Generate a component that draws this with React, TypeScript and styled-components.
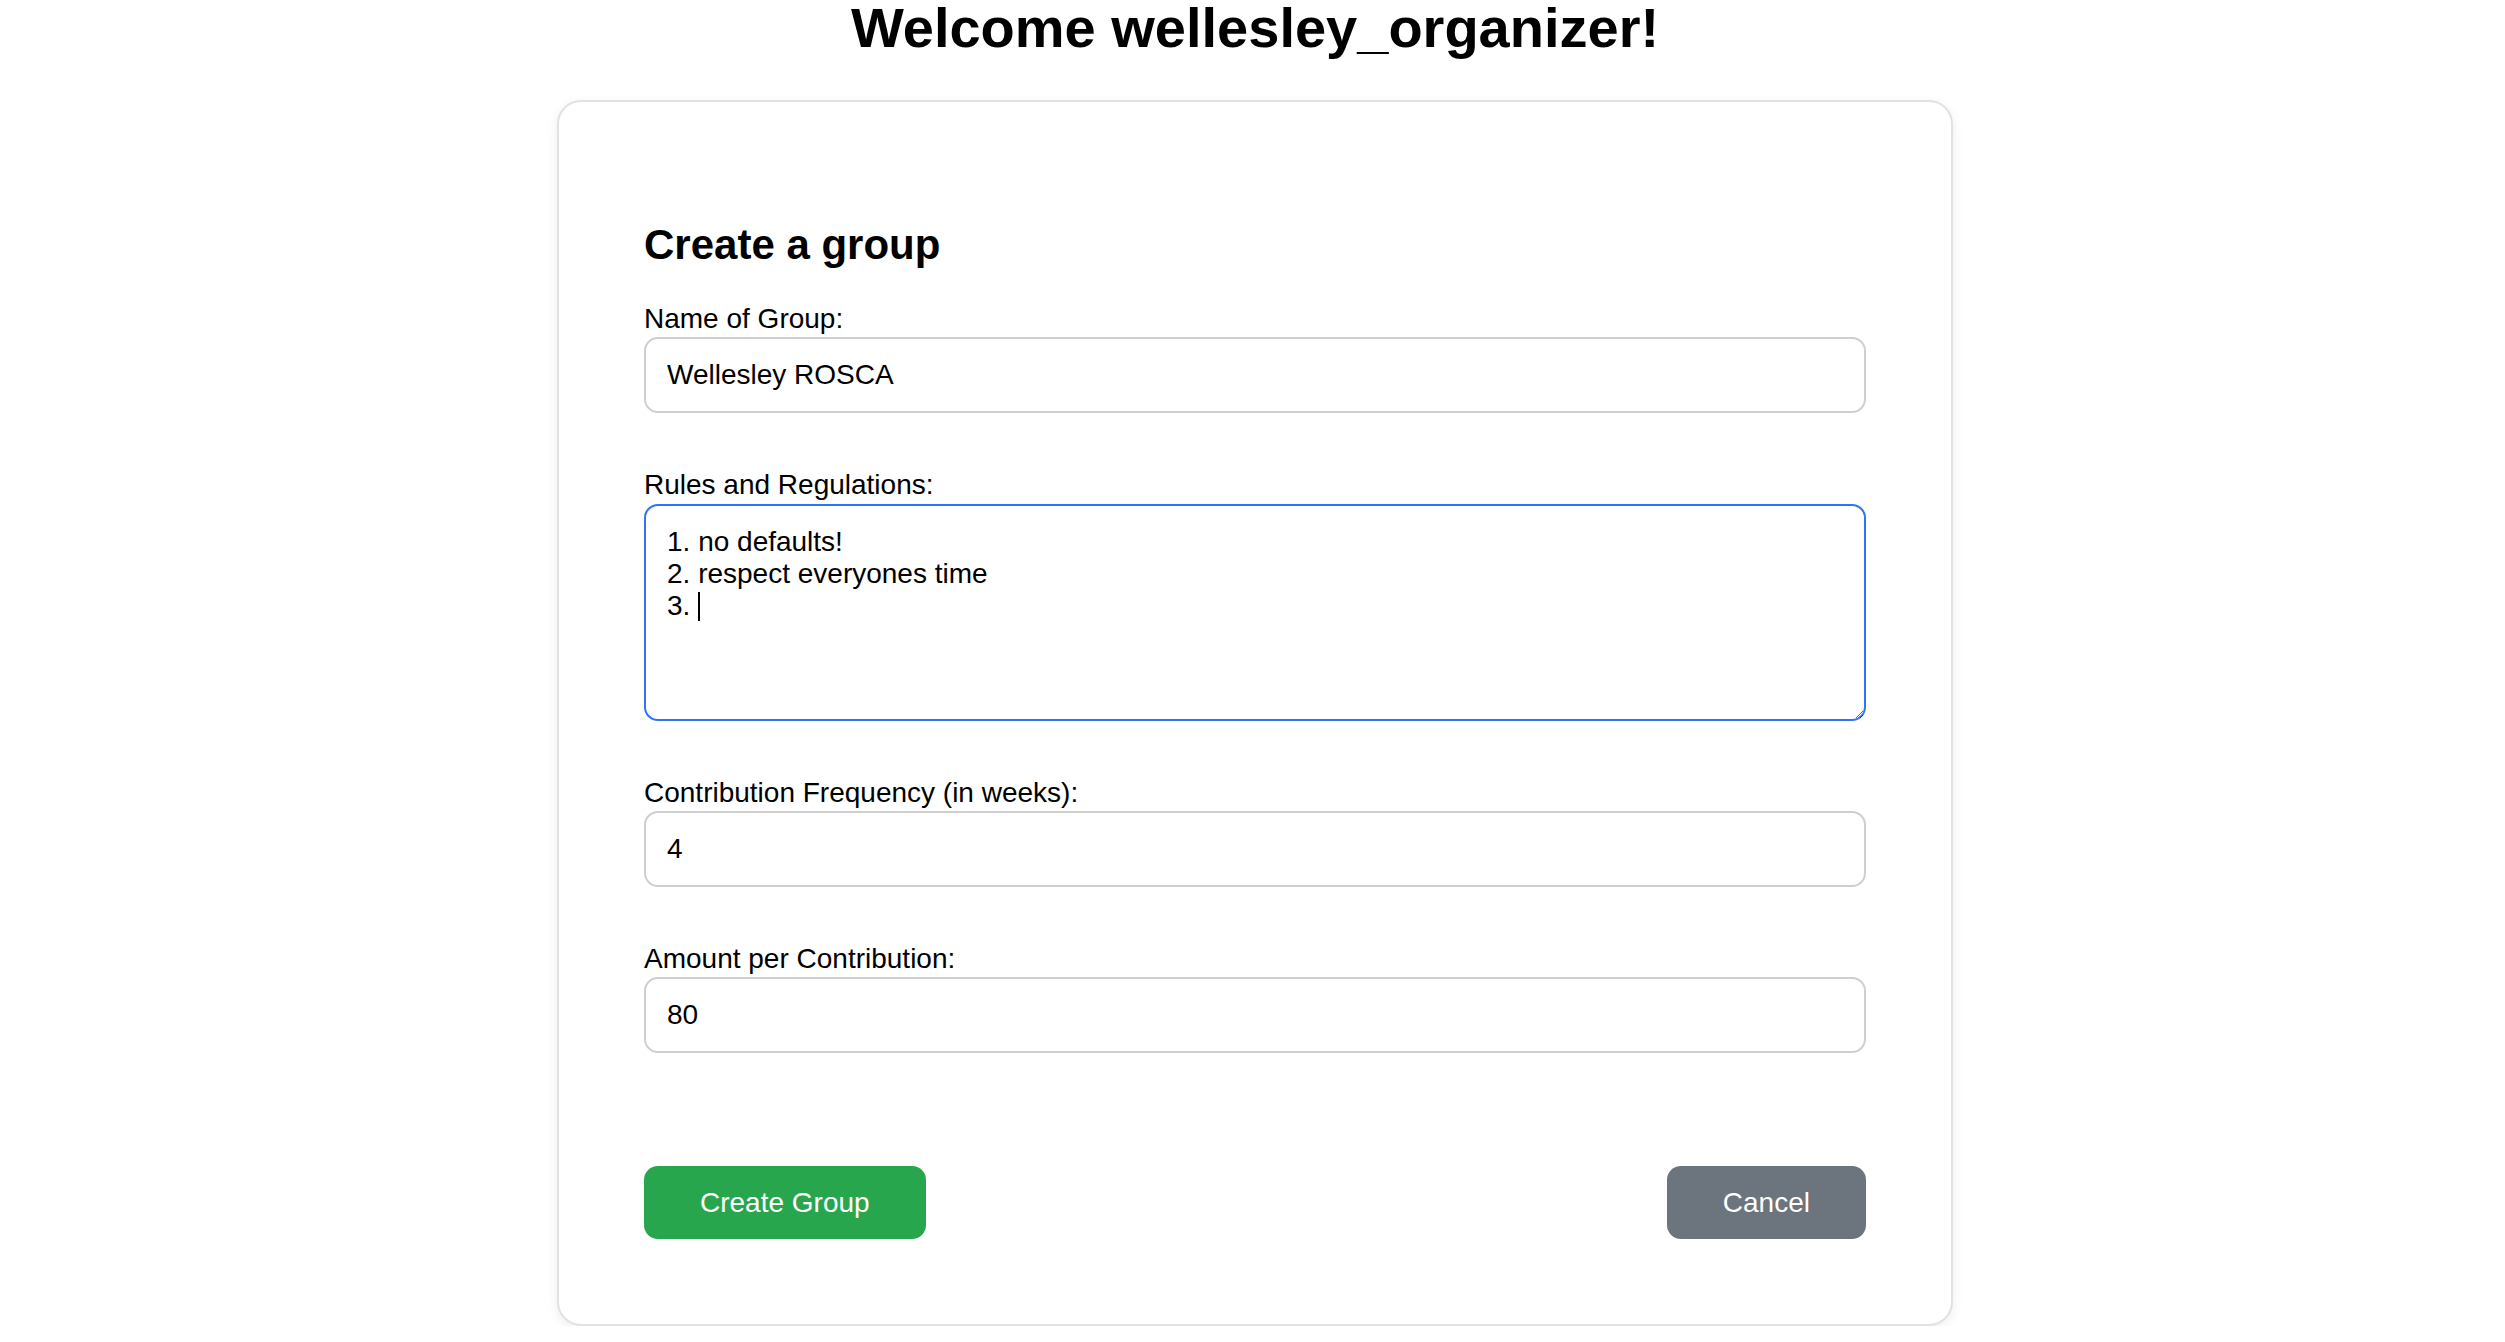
import styled, { createGlobalStyle } from "styled-components";

const GlobalStyle = createGlobalStyle`
  html, body {
    margin: 0;
    padding: 0;
    background: #ffffff;
    font-family: "Liberation Sans", Arial, Helvetica, sans-serif;
    color: #000;
  }
  * {
    box-sizing: border-box;
  }
`;

const Page = styled.div`
  display: flex;
  flex-direction: column;
  align-items: center;
  width: 100%;
  padding-left: 5px;
`;

const Title = styled.h1`
  margin: 0 0 44px;
  font-size: 56px;
  line-height: 1;
  font-weight: 700;
  text-align: center;
`;

const Card = styled.form`
  width: 1396px;
  padding: 119px 85px 85px;
  border: 2px solid #e2e2e2;
  border-radius: 24px;
  box-shadow: 0 3px 12px rgba(0, 0, 0, 0.07);
  background: #fff;
  display: flex;
  flex-direction: column;
`;

const Heading = styled.h2`
  margin: 0 0 34px;
  font-size: 42px;
  line-height: 1.15;
  font-weight: 700;
`;

const Field = styled.div`
  display: flex;
  flex-direction: column;
  margin-bottom: 56px;
`;

const Label = styled.label`
  font-size: 28px;
  line-height: 1.15;
  margin-bottom: 2px;
  color: #000;
`;

const Input = styled.input`
  height: 76px;
  width: 100%;
  padding: 0 21px;
  font-family: inherit;
  font-size: 28px;
  color: #000;
  border: 2px solid #cfcfcf;
  border-radius: 14px;
  background: #fff;
  outline: none;
`;

const AreaWrap = styled.div`
  position: relative;
  display: flex;
`;

const TextArea = styled.textarea`
  height: 217px;
  width: 100%;
  padding: 20px 21px;
  font-family: inherit;
  font-size: 28px;
  line-height: 1.15;
  color: #000;
  border: 2px solid #2f74f5;
  border-radius: 14px;
  background: #fff;
  outline: none;
  resize: both;
  caret-color: transparent;
`;

const Caret = styled.span`
  position: absolute;
  left: 54px;
  top: 88px;
  width: 2px;
  height: 29px;
  background: #000;
  pointer-events: none;
`;

const Actions = styled.div`
  display: flex;
  justify-content: space-between;
  align-items: center;
  margin-top: 57px;
`;

const Button = styled.button<{ $tone: "primary" | "muted" }>`
  height: 73px;
  padding: 0 56px;
  font-family: inherit;
  font-size: 28px;
  color: #fff;
  border: none;
  border-radius: 14px;
  cursor: pointer;
  background: ${(p) => (p.$tone === "primary" ? "#28a64d" : "#6c747d")};
`;

export default function App() {
  return (
    <>
      <GlobalStyle />
      <Page>
        <Title>Welcome wellesley_organizer!</Title>
        <Card onSubmit={(e) => e.preventDefault()}>
          <Heading>Create a group</Heading>
          <Field>
            <Label htmlFor="name">Name of Group:</Label>
            <Input id="name" type="text" defaultValue="Wellesley ROSCA" />
          </Field>
          <Field>
            <Label htmlFor="rules">Rules and Regulations:</Label>
            <AreaWrap>
              <TextArea
                id="rules"
                defaultValue={"1. no defaults!\n2. respect everyones time\n3. "}
              />
              <Caret />
            </AreaWrap>
          </Field>
          <Field>
            <Label htmlFor="freq">Contribution Frequency (in weeks):</Label>
            <Input id="freq" type="text" defaultValue="4" />
          </Field>
          <Field>
            <Label htmlFor="amount">Amount per Contribution:</Label>
            <Input id="amount" type="text" defaultValue="80" />
          </Field>
          <Actions>
            <Button type="submit" $tone="primary">
              Create Group
            </Button>
            <Button type="button" $tone="muted">
              Cancel
            </Button>
          </Actions>
        </Card>
      </Page>
    </>
  );
}
